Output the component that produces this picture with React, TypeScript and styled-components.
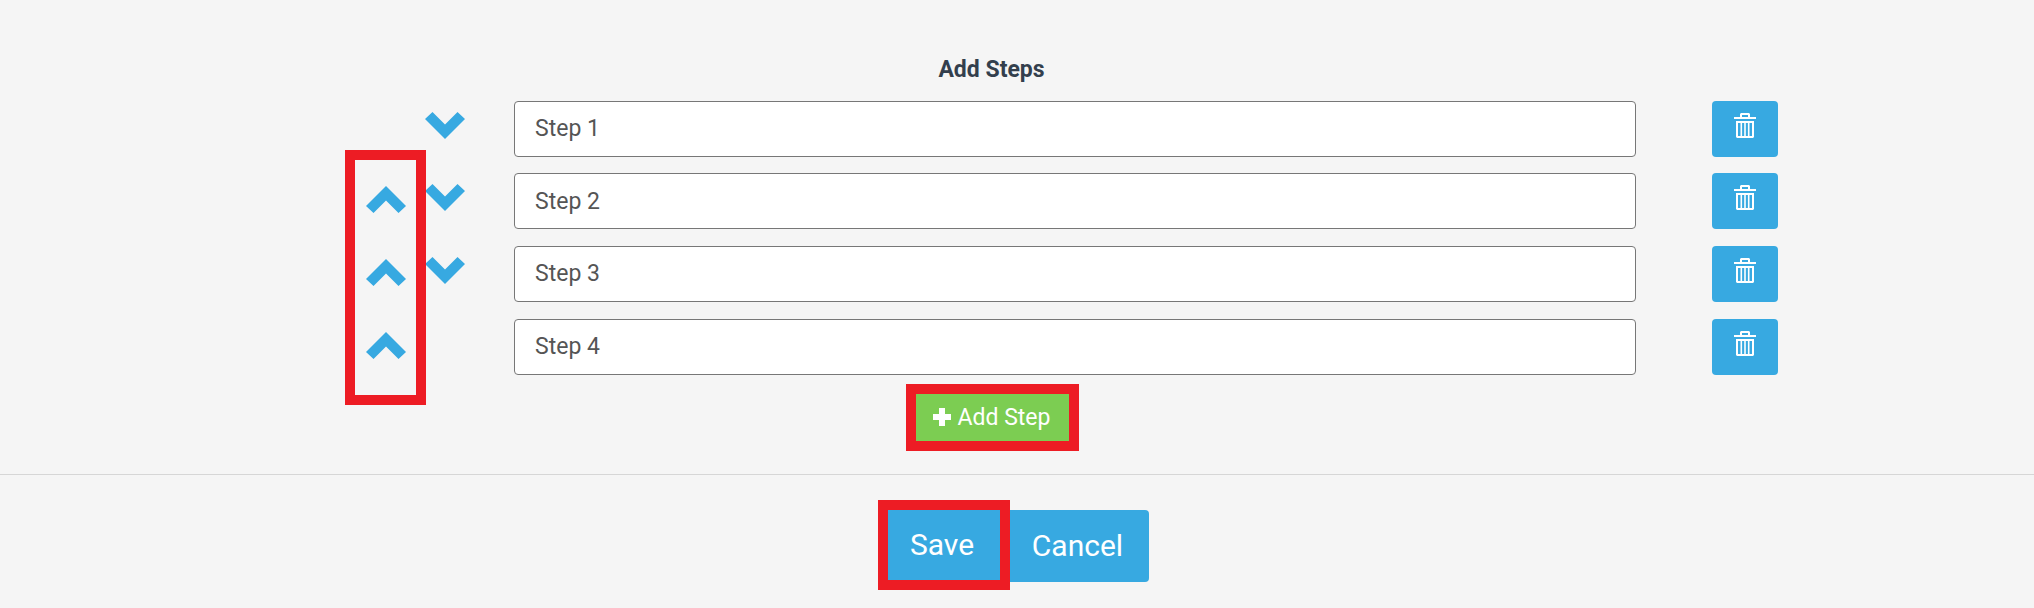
import { createGlobalStyle } from "styled-components";
import styled from "styled-components";

const BLUE = "#37a9e1";
const RED = "#ed1c24";

const GlobalStyle = createGlobalStyle`
  html, body {
    margin: 0;
    padding: 0;
    background: #f5f5f5;
    overflow: hidden;
  }
  * {
    box-sizing: border-box;
  }
`;

const Page = styled.div`
  width: 2034px;
  height: 608px;
  background: #f5f5f5;
  font-family: Roboto, "Liberation Sans", sans-serif;
`;

const StepsPanel = styled.section`
  position: relative;
  width: 1985px;
  padding-top: 54px;
  padding-bottom: 23px;
  display: flex;
  flex-direction: column;
  align-items: center;
`;

const PanelTitle = styled.h2`
  margin: 0 2px 14.6px 0;
  font-size: 23px;
  line-height: 32px;
  font-weight: 700;
  color: #333f4d;
`;

const StepList = styled.div`
  width: 100%;
  padding-left: 366px;
  display: flex;
  flex-direction: column;
  gap: 16.67px;
`;

const StepRow = styled.div`
  display: flex;
  height: 56px;
`;

const MoveSlot = styled.div<{ $offset: number }>`
  width: 40px;
  height: 56px;
  margin-right: 19px;
  padding-top: ${(p) => p.$offset}px;
`;

const StepInput = styled.input`
  width: 1122px;
  height: 56px;
  margin-left: 30px;
  padding: 0 20px;
  background: #fff;
  border: 1px solid #777;
  border-radius: 4px;
  font-family: inherit;
  font-size: 23px;
  color: #555;
  outline: none;

  &::placeholder {
    color: #555;
    opacity: 1;
  }
`;

const DeleteButton = styled.button`
  width: 66px;
  height: 56px;
  margin-left: 76px;
  padding: 12px 0 0;
  background: ${BLUE};
  border: 0;
  border-radius: 4px;
  display: flex;
  justify-content: center;
  align-items: flex-start;
`;

const UpHighlight = styled.div`
  position: absolute;
  left: 345px;
  top: 150px;
  width: 81px;
  height: 255px;
  border: 10px solid ${RED};
  pointer-events: none;
`;

const AddStepButton = styled.button`
  margin-top: 9.4px;
  width: 173px;
  height: 67px;
  background: #7ccd52;
  border: 10px solid ${RED};
  color: #fff;
  font-family: inherit;
  font-size: 23px;
  display: flex;
  align-items: center;
  justify-content: center;
  gap: 7px;
  padding: 0 2px 0 0;
`;

const Footer = styled.footer`
  border-top: 1px solid #d6d6d6;
  padding: 25px 7px 0 0;
  display: flex;
  justify-content: center;
  align-items: flex-start;
`;

const SaveButton = styled.button`
  width: 132px;
  height: 90px;
  background: ${BLUE};
  border: 10px solid ${RED};
  color: #fff;
  font-family: inherit;
  font-size: 30px;
  padding: 0 4px 0 0;
`;

const CancelButton = styled.button`
  width: 139px;
  height: 72px;
  margin-top: 10px;
  background: ${BLUE};
  border: 0;
  border-radius: 0 4px 4px 0;
  color: #fff;
  font-family: inherit;
  font-size: 30px;
  padding: 0 4px 0 0;
`;

const Chevron = ({ up }: { up?: boolean }) => (
  <svg width="40" height="27" viewBox="0 0 40 27" style={{ display: "block" }}>
    <polygon
      fill={BLUE}
      points={
        up
          ? "0,20 7.5,27 20,14.5 32.5,27 40,20 20,0"
          : "0,7 7.5,0 20,12.5 32.5,0 40,7 20,27"
      }
    />
  </svg>
);

const TrashIcon = () => (
  <svg width="22" height="25" viewBox="0 0 22 25" fill="#fff">
    <path d="M6 4V1L7 0h8l1 1v3h-2V2H8v2z" />
    <rect x="0" y="4" width="22" height="2" />
    <path d="M2 8h18v16l-1 1H3l-1-1zM4 10v13h14V10z" />
    <rect x="6.5" y="10" width="1.6" height="13" />
    <rect x="10.2" y="10" width="1.6" height="13" />
    <rect x="13.9" y="10" width="1.6" height="13" />
  </svg>
);

const PlusIcon = () => (
  <svg width="18" height="18" viewBox="0 0 18 18" fill="#fff">
    <path d="M6 0h6v6h6v6h-6v6H6v-6H0V6h6z" />
  </svg>
);

const steps = ["Step 1", "Step 2", "Step 3", "Step 4"];

export default function App() {
  return (
    <Page>
      <GlobalStyle />
      <StepsPanel>
        <PanelTitle>Add Steps</PanelTitle>
        <StepList>
          {steps.map((step, i) => (
            <StepRow key={step}>
              <MoveSlot $offset={13}>{i > 0 && <Chevron up />}</MoveSlot>
              <MoveSlot $offset={11}>
                {i < steps.length - 1 && <Chevron />}
              </MoveSlot>
              <StepInput placeholder={step} readOnly />
              <DeleteButton>
                <TrashIcon />
              </DeleteButton>
            </StepRow>
          ))}
        </StepList>
        <AddStepButton>
          <PlusIcon />
          Add Step
        </AddStepButton>
        <UpHighlight />
      </StepsPanel>
      <Footer>
        <SaveButton>Save</SaveButton>
        <CancelButton>Cancel</CancelButton>
      </Footer>
    </Page>
  );
}
